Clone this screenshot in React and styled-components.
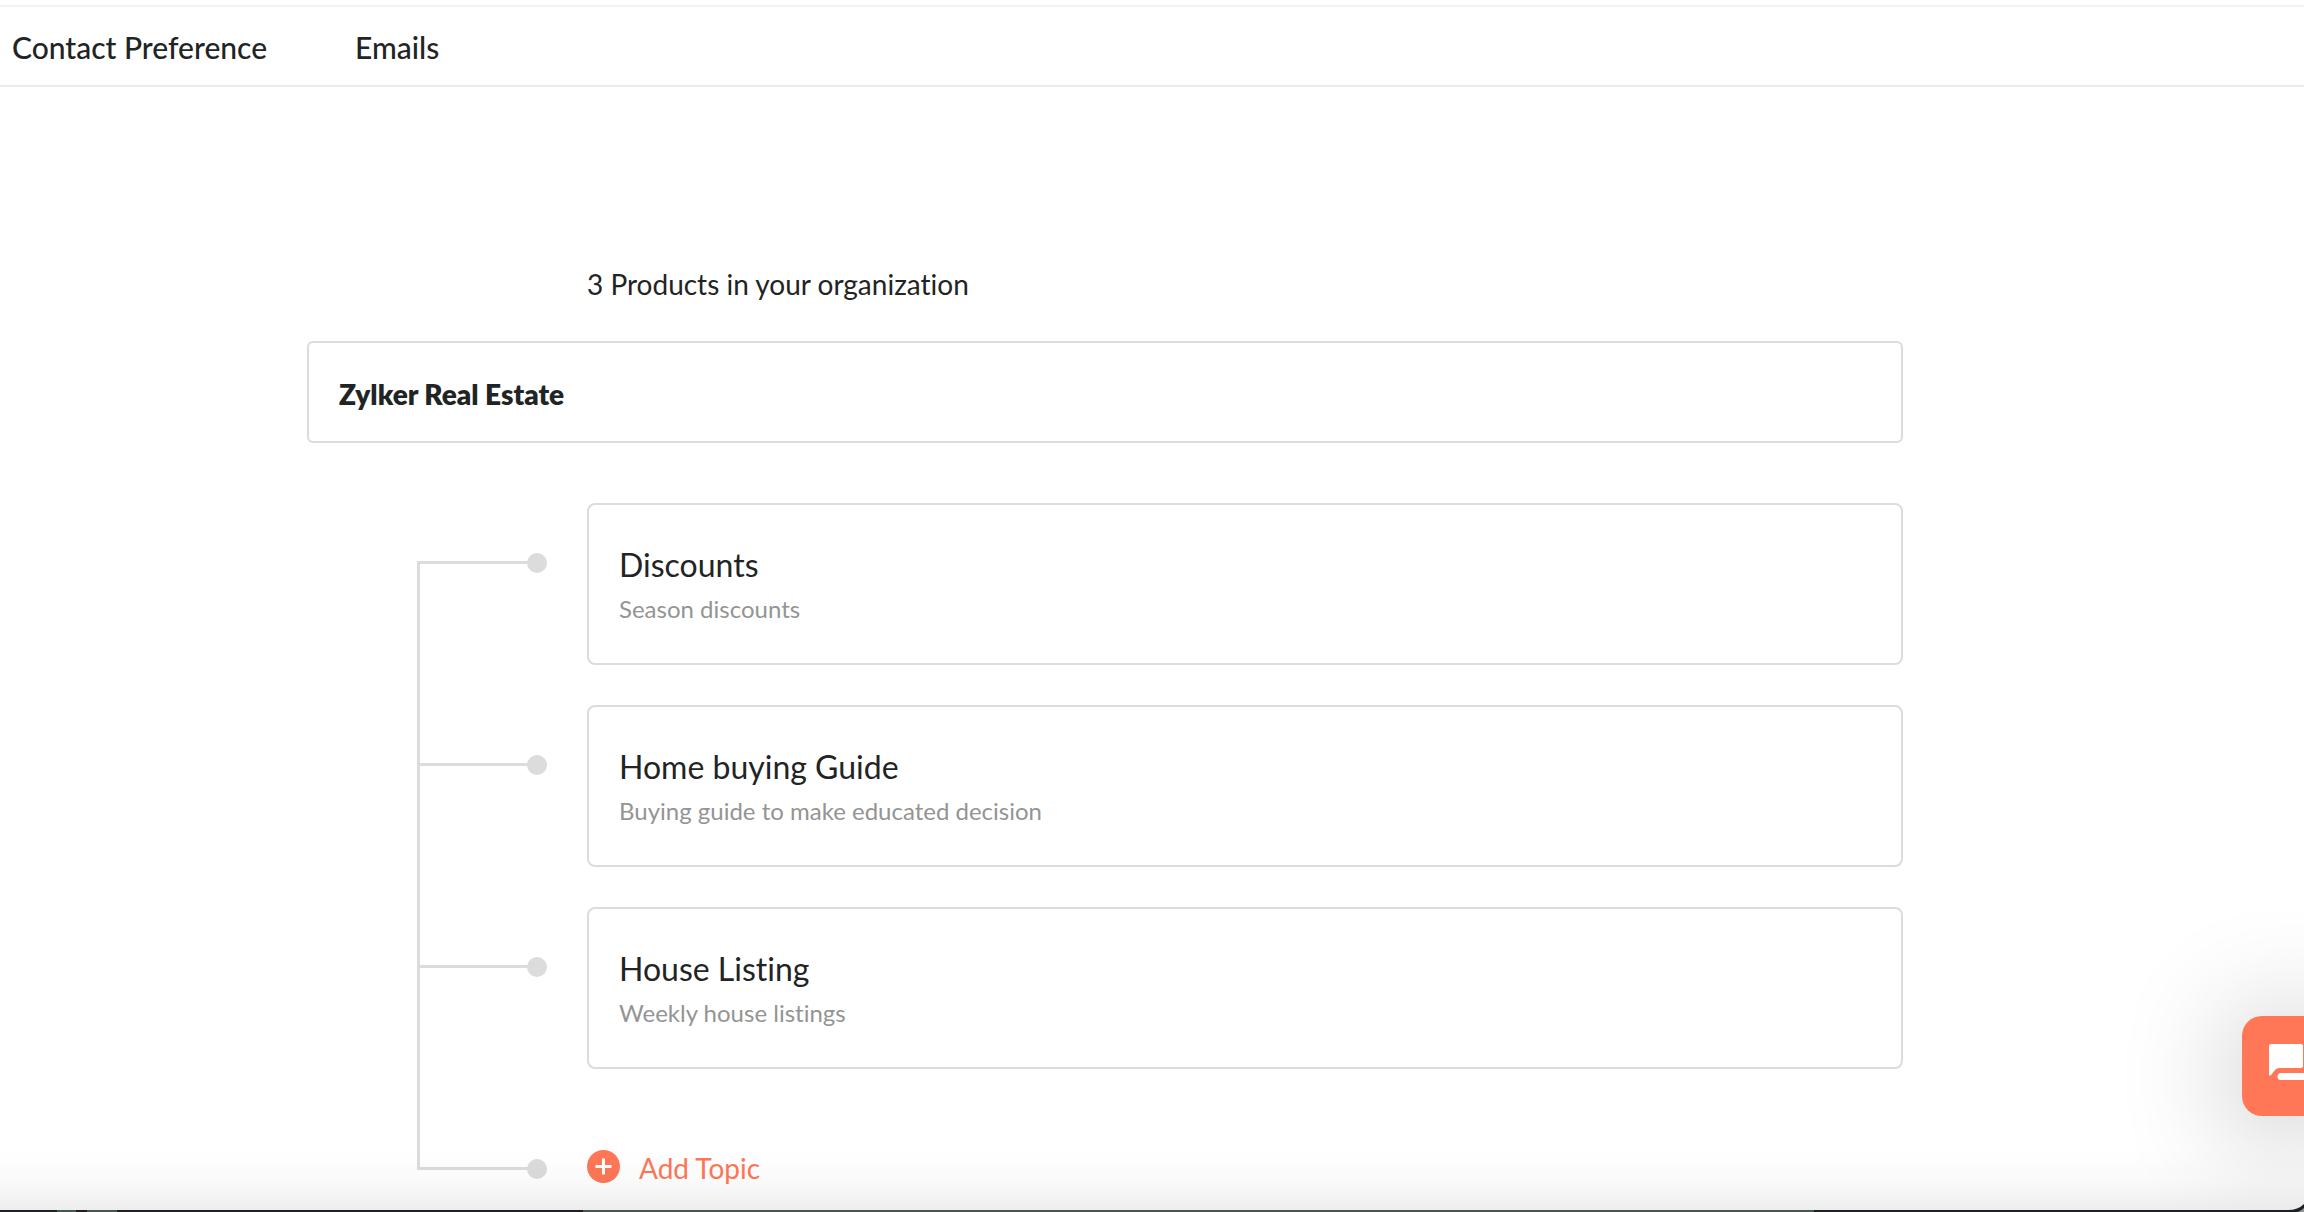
import React from 'react'
import styled, {createGlobalStyle} from 'styled-components'

const GlobalStyle = createGlobalStyle`
    *{
        box-sizing:border-box;
    }

    body{
        margin:0;
        background:#fff;
        color:#1f2424;
        font-family:Lato, "Open Sans", sans-serif;
        font-variant-ligatures:none;
    }
`

const LINE = '#dcdcdc'
const ACCENT = '#ff7757'
const EDGE = '#1f2024'
const EDGE_TEAL = '#44584f'

const Page = styled.div`
    min-height:100vh;
    padding-top:5px;
    overflow-x:hidden;
`

const StyledNav = styled.nav`
    display:flex;
    gap:88px;
    padding:20px 12px 18px;
    border-top:2px solid #f4f4f4;
    border-bottom:2px solid #ececec;
`

const NavItem = styled.a`
    color:inherit;
    font-size:30px;
    line-height:40px;
    font-weight:500;
    text-decoration:none;
`

const Content = styled.main`
    padding:179px 401px 0 307px;
`

const Summary = styled.h1`
    margin:0 0 39px 280px;
    font-size:28px;
    line-height:36px;
    font-weight:400;
`

const Organization = styled.h2`
    margin:0 0 60px;
    padding:33px 30px 29px;
    border:2px solid ${LINE};
    border-radius:6px;
    font-size:28px;
    line-height:36px;
    font-weight:800;
`

const Tree = styled.ul`
    margin:0;
    padding:0 0 0 110px;
    list-style:none;
`

const TreeRow = styled.li`
    display:flex;
    gap:40px;
`

const Branch = styled.div`
    display:flex;
    flex-direction:column;
    flex:none;
    width:130px;
`

const StemAbove = styled.div`
    height:58px;
    border-left:3px solid ${({$hidden}) => $hidden ? 'transparent' : LINE};
`

const StemBelow = styled.div`
    flex:1;
    border-left:3px solid ${LINE};
`

const Twig = styled.div`
    display:flex;
    align-items:center;
    justify-content:flex-end;
    height:3px;
    background:${LINE};
`

const Dot = styled.span`
    flex:none;
    width:20px;
    height:20px;
    margin-top:1px;
    border-radius:50%;
    background:${LINE};
`

const Card = styled.article`
    flex:1;
    margin-bottom:40px;
    padding:40px 30px 38px;
    border:2px solid ${LINE};
    border-radius:8px;
`

const Title = styled.h3`
    margin:0 0 8px;
    font-size:32px;
    line-height:40px;
    font-weight:400;
`

const Description = styled.p`
    margin:0;
    color:#949494;
    font-size:24px;
    line-height:32px;
`

const AddButton = styled.button`
    display:flex;
    align-items:flex-start;
    gap:19px;
    margin:41px 0 0;
    padding:0;
    border:0;
    background:none;
    color:${ACCENT};
    font:inherit;
    font-size:28px;
    line-height:36px;
    cursor:pointer;
`

const ChatButton = styled.button`
    display:flex;
    align-items:flex-start;
    position:fixed;
    right:-38px;
    bottom:96px;
    width:100px;
    height:100px;
    padding:28px 0 0 27px;
    border:0;
    border-radius:20px;
    background:${ACCENT};
    box-shadow:0 10px 120px rgba(0, 0, 0, 0.3);
    cursor:pointer;
`

const BottomFade = styled.div`
    position:fixed;
    left:0;
    right:0;
    bottom:0;
    height:64px;
    background:linear-gradient(rgba(0, 0, 0, 0), rgba(0, 0, 0, 0.02) 50%, rgba(0, 0, 0, 0.07));
    pointer-events:none;
`

const DesktopEdge = styled.div`
    position:fixed;
    left:0;
    right:0;
    bottom:0;
    height:2px;
    background:linear-gradient(90deg,
        ${EDGE} 57px, ${EDGE_TEAL} 57px, ${EDGE_TEAL} 76px,
        ${EDGE} 76px, ${EDGE} 87px, ${EDGE_TEAL} 87px, ${EDGE_TEAL} 117px,
        ${EDGE} 117px, ${EDGE} 583px, ${EDGE_TEAL} 583px, ${EDGE_TEAL} 1814px,
        ${EDGE} 1814px);
    pointer-events:none;
`

const WindowCorner = styled.svg`
    position:fixed;
    right:0;
    bottom:0;
`

const PlusIcon = () => (
    <svg width="33" height="33" viewBox="0 0 33 33" aria-hidden="true">
        <circle cx="16.5" cy="16.5" r="16.5" fill={ACCENT}/>
        <path d="M16.5 8.5v16M8.5 16.5h16" stroke="#fff" strokeWidth="3"/>
    </svg>
)

const ChatIcon = () => (
    <svg width="48" height="48" viewBox="0 0 48 48" aria-hidden="true">
        <path d="M2 0h30a2 2 0 0 1 2 2v20a2 2 0 0 1-2 2H10q-2 0-3.500 1.500L2 31q-2 2-2-1V2a2 2 0 0 1 2-2z" fill="#fff"/>
        <path d="M12 29h28V10h4a2 2 0 0 1 2 2v32l-8-8H12a3.500 3.500 0 0 1 0-7z" fill="#fff"/>
    </svg>
)

const links = [
    {to:'#contact-preference', label:'Contact Preference'},
    {to:'#emails', label:'Emails'},
]

const topics = [
    {title:'Discounts', description:'Season discounts'},
    {title:'Home buying Guide', description:'Buying guide to make educated decision'},
    {title:'House Listing', description:'Weekly house listings'},
]

const Connector = ({first, last}) => (
    <Branch aria-hidden="true">
        <StemAbove $hidden={first}/>
        <Twig><Dot/></Twig>
        {!last && <StemBelow/>}
    </Branch>
)

const App = () => (
    <Page>
        <GlobalStyle/>
        <StyledNav>
            {links.map(link => (<NavItem key={link.to} href={link.to}>{link.label}</NavItem>))}
        </StyledNav>
        <Content>
            <Summary>{topics.length} Products in your organization</Summary>
            <Organization>Zylker Real Estate</Organization>
            <Tree>
                {topics.map((topic, key) => (
                    <TreeRow key={topic.title}>
                        <Connector first={key === 0}/>
                        <Card>
                            <Title>{topic.title}</Title>
                            <Description>{topic.description}</Description>
                        </Card>
                    </TreeRow>
                ))}
                <TreeRow>
                    <Connector last/>
                    <AddButton type="button"><PlusIcon/>Add Topic</AddButton>
                </TreeRow>
            </Tree>
        </Content>
        <BottomFade/>
        <ChatButton type="button" aria-label="Open chat"><ChatIcon/></ChatButton>
        <DesktopEdge/>
        <WindowCorner width="16" height="10" viewBox="0 0 16 10" aria-hidden="true">
            <path d="M16 2v8H0V8q10 0 16-6z" fill={EDGE}/>
            <path d="M16 6v4H9q4-1 7-4z" fill="#8f9794"/>
        </WindowCorner>
    </Page>
)

export default App
